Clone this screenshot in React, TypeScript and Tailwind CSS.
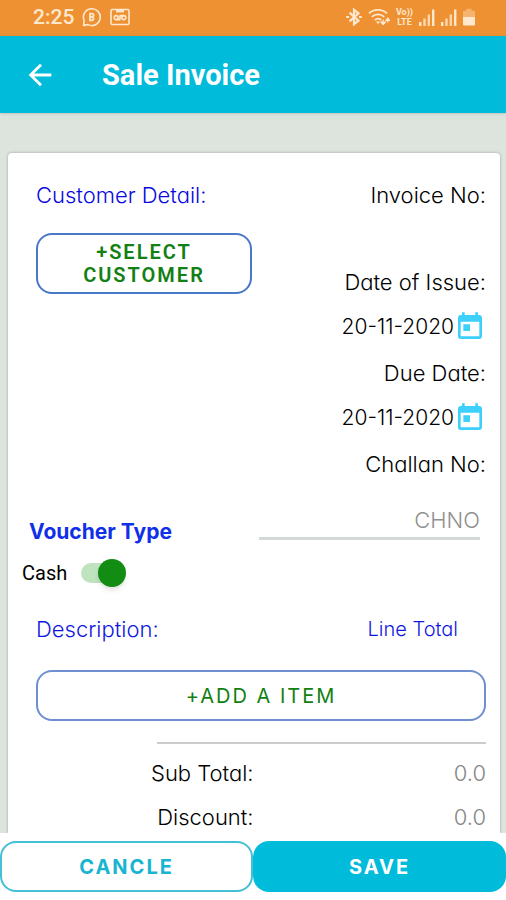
import { useState } from "react";
import { MdArrowBack, MdToday } from "react-icons/md";

const LABEL = "text-[22px] leading-7";

function ChatIcon() {
  return (
    <svg viewBox="0 0 20 20" className="size-5" fill="none" stroke="currentColor" strokeWidth="1.6">
      <path d="M1.6 18.4l.5-5A8.4 8.4 0 1 1 6 17.6z" strokeLinejoin="round" />
      <path d="M8 6.6v6.8h2.2a1.9 1.9 0 0 0 0-3.6H8h2a1.6 1.6 0 0 0 0-3.2z" strokeWidth="1.8" />
    </svg>
  );
}

function CassetteIcon() {
  return (
    <svg viewBox="0 0 20 18" className="h-[18px] w-5" fill="none" stroke="currentColor" strokeWidth="1.6">
      <rect x="1" y="1.5" width="18" height="15" rx="1" />
      <path d="M6 3.2h8" strokeWidth="2.4" />
      <circle cx="6.2" cy="9.6" r="2" />
      <circle cx="13.8" cy="9.6" r="2" />
      <path d="M6.2 11.6h4.2M9.6 7.6h4.2M10 7.6v4" />
    </svg>
  );
}

function BluetoothIcon() {
  return (
    <svg viewBox="0 0 16 18" className="h-[18px] w-4" fill="none" stroke="currentColor" strokeWidth="2.2">
      <path d="M3.5 4.6l9 8L8 16.2V1.8l4.5 3.6-9 8" />
      <path d="M0.2 9h3M13 9h2.8" />
    </svg>
  );
}

function WifiIcon() {
  return (
    <svg viewBox="0 0 22 18" className="h-[18px] w-[22px]" fill="none" stroke="currentColor" strokeWidth="1.8">
      <path d="M1 5.4a13.5 13.5 0 0 1 18 0" />
      <path d="M3.8 8.8a9.3 9.3 0 0 1 12.4 0" />
      <path d="M6.8 12a5 5 0 0 1 6.4 0" />
      <path d="M8 13.6h4L10 16.2z" fill="currentColor" stroke="none" />
      <path d="M15.2 11.6v4M13 14l2.2 2.6 2.2-2.6z" fill="currentColor" strokeWidth="1.2" />
      <path d="M19.8 14.6v-4M18 12.4l1.8-2.4 1.8 2.4z" fill="currentColor" strokeWidth="1.2" />
    </svg>
  );
}

function SignalIcon() {
  return (
    <svg viewBox="0 0 16 17" className="h-[17px] w-4" fill="currentColor">
      <rect x="0" y="13" width="2.4" height="4" />
      <rect x="4.3" y="9.5" width="2.4" height="7.5" opacity="0.8" />
      <rect x="8.6" y="5.5" width="2.4" height="11.5" opacity="0.8" />
      <rect x="13" y="0.5" width="2.4" height="16.5" />
    </svg>
  );
}

function BatteryIcon() {
  return (
    <svg viewBox="0 0 12 18" className="h-[18px] w-3" fill="currentColor">
      <path d="M3.5 0.8h5v2H11a1 1 0 0 1 1 1V9H0V3.8a1 1 0 0 1 1-1h2.5z" opacity="0.4" />
      <path d="M0 9h12v7.4a1 1 0 0 1-1 1H1a1 1 0 0 1-1-1z" />
    </svg>
  );
}

function StatusBar() {
  return (
    <div className="flex h-9 shrink-0 items-center justify-between bg-[#ee9132] pr-[31px] pb-0.5 pl-[33px] text-[#ffe8cd]">
      <div className="flex items-center gap-2">
        <span className="font-[Roboto,sans-serif] text-[21px] leading-6 font-medium">2:25</span>
        <ChatIcon />
        <CassetteIcon />
      </div>
      <div className="flex items-center gap-[6px]">
        <BluetoothIcon />
        <WifiIcon />
        <span className="flex flex-col items-center font-[Roboto,sans-serif] text-[9px] leading-[10px] font-bold">
          <span>Vo))</span>
          <span>LTE</span>
        </span>
        <SignalIcon />
        <SignalIcon />
        <BatteryIcon />
      </div>
    </div>
  );
}

function DateField({ label, value }: { label: string; value: string }) {
  return (
    <>
      <span className={`mb-[17px] ${LABEL}`}>{label}</span>
      <button
        type="button"
        aria-label={`${label} ${value}`}
        className="mb-[18px] flex h-7 items-center text-[21px] leading-7"
      >
        {value}
        <MdToday className="size-8 text-[#3dd0fa]" />
      </button>
    </>
  );
}

export default function App() {
  const [cash, setCash] = useState(true);
  const [challanNo, setChallanNo] = useState("");
  const [discount, setDiscount] = useState("");

  return (
    <div className="flex h-screen flex-col bg-white font-[Inter,sans-serif] font-light text-black [font-feature-settings:'cv11']">
      <StatusBar />
      <header className="z-10 flex h-[77px] shrink-0 items-center bg-[#00bbd9] pl-[23px] text-white shadow-sm">
        <button type="button" aria-label="Back">
          <MdArrowBack className="size-[34px]" />
        </button>
        <h1 className="ml-[45px] font-[Roboto,sans-serif] text-[29px] leading-8 font-bold">
          Sale Invoice
        </h1>
      </header>

      <main className="flex min-h-0 flex-1 flex-col overflow-hidden bg-[#dde4dd] pt-10 pr-1.5 pl-2">
        <div className="flex-1 rounded-t-sm bg-white px-3.5 pt-7 shadow-[0_0_3px_rgba(0,0,0,0.3)]">
          <div className="grid grid-cols-2 gap-1">
            <div className="flex flex-col">
              <h2 className={`ml-3.5 text-[#0808e0] ${LABEL}`}>Customer Detail:</h2>
              <button
                type="button"
                className="mt-6 ml-3.5 rounded-2xl border-2 border-[#4a78c8] px-8 pt-[6px] pb-[5px] font-[Roboto,sans-serif] text-xl leading-[23px] font-semibold tracking-widest text-[#128012]"
              >
                +SELECT CUSTOMER
              </button>
              <h2 className="mt-auto ml-[7px] text-[21px] leading-7 font-bold text-[#1030e8]">
                Voucher Type
              </h2>
              <label className="mt-3 flex h-[30px] items-center gap-3.5 font-[Roboto,sans-serif] text-xl font-normal">
                Cash
                <span className="relative flex h-5 w-[46px] items-center">
                  <input
                    type="checkbox"
                    role="switch"
                    checked={cash}
                    onChange={(e) => setCash(e.target.checked)}
                    className="peer h-5 w-10 appearance-none rounded-full bg-gray-300 checked:bg-[#bfe2bf]"
                  />
                  <span className="pointer-events-none absolute left-0 size-7 rounded-full bg-gray-100 shadow-md peer-checked:left-[17px] peer-checked:bg-[#128c12]" />
                </span>
              </label>
            </div>

            <div className="flex flex-col items-end pb-12">
              <span className={`mb-[59px] ${LABEL}`}>Invoice No:</span>
              <DateField label="Date of Issue:" value="20-11-2020" />
              <DateField label="Due Date:" value="20-11-2020" />
              <label htmlFor="challan" className={LABEL}>
                Challan No:
              </label>
              <div className="mt-7 w-full pr-1.5 pl-[3px]">
                <input
                  id="challan"
                  value={challanNo}
                  onChange={(e) => setChallanNo(e.target.value)}
                  placeholder="CHNO"
                  className="block w-full border-b-3 border-[#d3d9d5] pb-[3px] text-right text-[22px] leading-7 outline-none placeholder:text-[#909090]"
                />
              </div>
            </div>
          </div>

          <div className="mt-[27px] flex justify-between pr-7 pl-3.5 text-[#1018e0]">
            <h2 className={LABEL}>Description:</h2>
            <h2 className="text-xl leading-7">Line Total</h2>
          </div>
          <div className="mt-[27px] pl-3.5">
            <button
              type="button"
              className="h-[51px] w-full rounded-2xl border-2 border-[#6f8fd0] text-xl font-normal tracking-widest text-[#128012]"
            >
              +ADD A ITEM
            </button>
          </div>

          <div className="mt-[21px] ml-auto w-[71%] border-t-2 border-[#cccccc] pt-[15px] text-[22px] leading-7">
            <div className="flex justify-between">
              <span className="flex w-[97px] shrink-0 justify-end whitespace-nowrap">Sub Total:</span>
              <output className="text-[#858585]">0.0</output>
            </div>
            <div className="mt-4 flex justify-between">
              <label htmlFor="discount" className="flex w-[97px] shrink-0 justify-end whitespace-nowrap">
                Discount:
              </label>
              <input
                id="discount"
                value={discount}
                onChange={(e) => setDiscount(e.target.value)}
                placeholder="0.0"
                className="w-24 text-right outline-none placeholder:text-[#858585]"
              />
            </div>
          </div>
        </div>
      </main>

      <footer className="z-10 grid shrink-0 grid-cols-2 bg-white pt-2 pb-2 text-xl font-bold tracking-widest">
        <button
          type="button"
          className="h-[51px] rounded-2xl border-2 border-[#45bfd6] text-[#18b4d0]"
        >
          CANCLE
        </button>
        <button type="button" className="h-[51px] rounded-2xl bg-[#00bbd9] text-white">
          SAVE
        </button>
      </footer>
    </div>
  );
}
